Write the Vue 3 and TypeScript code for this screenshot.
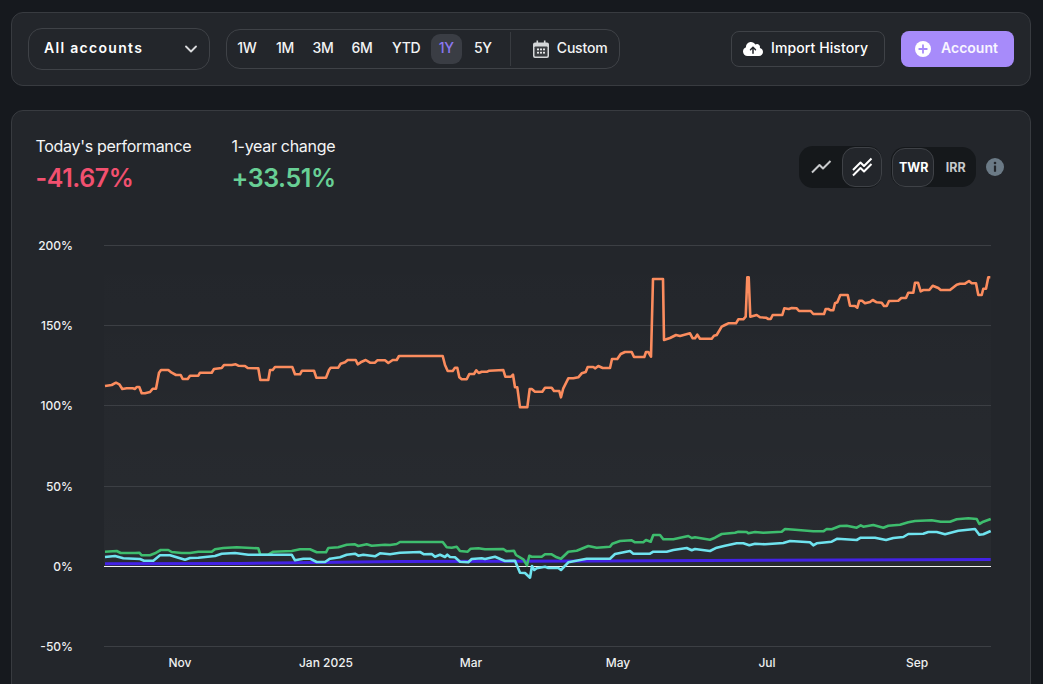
<script setup lang="ts">
const ranges = ['1W', '1M', '3M', '6M', 'YTD', '1Y', '5Y']
const yTicks = [
  { y: 245, label: '200%' },
  { y: 325, label: '150%' },
  { y: 405, label: '100%' },
  { y: 486, label: '50%' },
  { y: 646, label: '-50%' },
]
const xTicks = [
  { x: 180, label: 'Nov' },
  { x: 326, label: 'Jan 2025' },
  { x: 471, label: 'Mar' },
  { x: 618, label: 'May' },
  { x: 767, label: 'Jul' },
  { x: 917, label: 'Sep' },
]
const orange = '105,386 111.7,385 116,382.7 119.3,384.3 122.3,389 126.7,388.3 132.7,388.3 135,389 136.7,387 139.3,387 141.7,393.3 145,393.3 150,392 152.7,388.7 156,388.7 159,372.7 161,370 168.3,370 171.7,372.7 176,375 180.7,375 182.7,379 187.7,379 190,375.7 198.3,375.7 200,372.7 211.7,372.7 214,369 221.7,368 224,365 231.7,365 235.7,364.3 238.3,365.7 245,366 247.7,368 258.3,368.3 260.3,380 268.3,380 270,370 272.7,370 275,367 292.3,367 295,374.3 300,374.3 302,370.7 314,370.7 316.3,377.7 326,377.7 329,370 330.7,367.7 338.3,367.7 340.7,363.7 345,362.3 347.7,360 355.7,360 357.7,364.3 360.7,362.3 365.7,360 370,362.7 375,362.7 377.3,360.3 385,360.3 388.3,363 392.7,360 396.7,360 399,356 442.7,356 445,365 447.7,371 452.7,371 455,367.7 457.3,367.7 459.3,377.3 461.7,379.3 466.7,379.3 469.3,374 474,374 476.3,370.3 478.7,373 481.7,371.7 487.3,371.7 489.3,370.7 503.3,370 505.3,376.7 511,376.7 513,374.7 515,387.3 517.3,387.3 520,407.3 527.3,407.3 529.7,389 531.7,389 535,391.7 542.3,391.7 545,387.7 551.7,387.7 554,391 559.3,391 561,397.3 563.3,388.3 568.3,378.3 573.3,378.3 578.3,377.3 581.7,373.3 585.7,372 587.7,367 593.3,367 595.3,368.3 598.3,366 602.7,368 610,368 612,359 617.3,359 620.7,354 625,352 631.7,352 634,357 644.3,357 646,352 648.3,352 651,356.7 653,279 663,279 664,340 670,338 676,335 680,336 690,333.3 692.7,338.3 695,338.3 697.3,334.7 700,338.7 711.7,338.7 714,335.7 716.7,335 721.7,326.7 725,325 728.3,323.3 736,323.3 738.3,319.3 743.3,319.3 745.7,316.7 747.3,277.3 748.7,277.3 750.3,316.7 756.7,315 760,317.3 766,317.7 768.3,319 770.7,319 772.7,315 782.3,315 784.3,308.3 788.7,309 791.7,308 796.7,308.3 799,311 810.7,311 813.3,314 824,314 825.7,309 828.3,309 830.7,310.3 833.3,310.3 835,303.3 837.3,302.3 840.3,295 847.7,295 850,305.7 855,306 857.3,307.7 859.3,300.7 862,300.7 865,303.3 870,302 872.7,300 876.7,302.3 881.7,302.7 884,306 886.7,306 889,301 898.3,300.7 901.3,298 906,298 908.3,292.7 913.3,292.7 915,282.7 918,282.7 920.7,291.3 923.3,290 929.3,290 932.7,285.7 938.3,288 940.7,290 950,290 956.7,284.7 960,283.7 965,283.7 969,281 971.7,283.3 976,283.3 978.3,295 981.7,295 983.3,288.7 986,288.7 988.3,277.3 990.3,277.3'
const green = '105,551.7 116.7,551 120.7,553 135,553 139.3,552.7 141.7,555.3 150,555.3 155,553.3 160.7,550 168.3,550 171.7,552 181.7,553 190,553 198.3,551.7 211.7,551.7 215,549.3 223.3,548 236.7,547.3 258.3,548.3 260.3,554.7 268.3,554.7 273.3,551.7 291.7,551 300,549.3 310,549.3 316.7,552.3 326,552.3 328.3,548 338.3,547.3 346.7,544.7 355,544.3 358.3,546 366.7,544.3 371.7,545.7 385,544.7 390,545 396.7,544 400,542 442.7,542 446.7,547.3 451.7,547.7 456.7,546.7 460,551 467.7,551.7 470.7,548.7 478.3,548.3 485,549.3 503.3,549 506.7,551.3 514,550.7 516,555 523.3,559.3 527,565.3 529.3,555.7 531.7,556.7 541.7,556.7 545,554.3 551.7,554.3 556.7,557.3 561,558.7 568.3,551.7 576.7,550.7 588.3,546 596.7,547.7 610,546.7 612.3,543.7 620,541 631.7,540.3 635,542.3 643.3,542.3 646,540 650.7,541.7 653.3,535 660,535 663.3,539.3 673.3,539.3 688.3,536 691.7,538 695,537.3 710,539.7 715,537.7 721.7,534 735,532.7 738.3,531.7 746.7,532 748.3,533.3 755,532 763.3,532.7 781.7,531.7 785,529 795,529.7 813.3,531.3 823.3,531.3 826.7,529 831.7,529.3 840,526 846.7,525.7 856.7,527.7 860.7,525.3 863.3,526.7 873.3,525 883.3,527.7 888.3,525.7 900,524.7 908.3,522.3 915,521 931.7,520.3 940.7,521.7 950,521.7 956.7,519.3 968.3,518.3 976.7,519 979.3,524 983.3,521.7 990.7,519'
const cyan = '105,557 115,556 123.3,558.3 140,559 144,560.7 153.3,560.7 160,555.3 170,555.3 185,559.7 190,558 198.3,557.7 215,556 221.7,553.7 235,553 248.3,554.7 291.7,554.7 295,560.3 303.3,558.7 310,558.7 316.7,562 325,562 330,558.7 340,557.3 346.7,554.7 355,553.7 358.3,555.7 363.3,554.7 375,556.3 380,553.3 390,554.3 400,552.7 420,552 424,554.3 431.7,554 435,556.7 440,554.7 445,557 447.3,554.7 450,557 455,557.3 460,561.7 468.3,562.3 471.7,559 481.7,558.3 485,559 495,556.7 505,561 515,560.7 520,572.7 525,573 530,577.7 532,566 534.3,570 536.7,568.3 545,566.7 548.3,568 558.3,568 561,570 568.3,562.3 586.7,558.7 610,558.7 615,554 630,551 633.3,553.7 650,553.7 653.3,551.7 666.7,551.7 673.3,550 686.7,548 691.7,550.3 695,549 710,551 716.7,547.7 725,545.7 736.7,543.3 743.3,543.3 749.3,545.3 755,543.7 765,544.3 783.3,543 790,541 810,542.3 813.3,545.3 816.7,543.3 831.7,541.7 837.3,538.7 856.7,540 860.7,537.7 875,537.7 886,540 893.3,538 903.3,537 908.3,534 923.3,533.7 928.3,532 936.7,532 945,534.3 958.3,530.7 975,529 979.3,534.7 983.3,534.3 990.7,531'
const blue = '105,563.8 240,563.5 400,561.6 600,561 760,560.2 990.7,559.6'
</script>

<template>
  <div class="page">
    <header class="toolbar">
      <div class="select">
        <span class="raise">All accounts</span>
        <svg class="chev" viewBox="0 0 12 8" width="12" height="8">
          <path d="M1 1.500 6 6.500 11 1.500" fill="none" stroke="#d9dadc" stroke-width="1.800" stroke-linecap="round" stroke-linejoin="round" />
        </svg>
      </div>
      <div class="ranges">
        <button v-for="r in ranges" :key="r" class="range" :class="['r-' + r, { on: r === '1Y' }]">{{ r }}</button>
        <i class="sep"></i>
        <button class="custom">
          <svg viewBox="0 0 16 18" width="16" height="18">
            <path d="M3.500 0.500h1.600v2h5.800v-2h1.600v2H14a2 2 0 0 1 2 2V16a2 2 0 0 1-2 2H2a2 2 0 0 1-2-2V4.500a2 2 0 0 1 2-2h1.500z" fill="#d4d6d8" />
            <rect x="1.500" y="6.500" width="13" height="10" rx="0.800" fill="#3a3d41" />
            <g fill="#e4e5e6">
              <rect x="4" y="8.500" width="2" height="1.800" />
              <rect x="7" y="8.500" width="2" height="1.800" />
              <rect x="10" y="8.500" width="2" height="1.800" />
              <rect x="4" y="11.800" width="2" height="1.800" />
              <rect x="7" y="11.800" width="2" height="1.800" />
              <rect x="10" y="11.800" width="2" height="1.800" />
            </g>
          </svg>
          <span class="raise">Custom</span>
        </button>
      </div>
      <div class="actions">
        <button class="import">
          <svg viewBox="0 0 640 512" width="20" height="16">
            <path fill="#fff" d="M144 480C64.500 480 0 415.500 0 336c0-62.800 40.200-116.200 96.200-135.900c-.1-2.700-.2-5.400-.2-8.100c0-88.400 71.600-160 160-160c59.300 0 111 32.200 138.700 80.200C409.900 102 428.300 96 448 96c53 0 96 43 96 96c0 12.200-2.300 23.800-6.400 34.600C596 238.400 640 290.100 640 352c0 70.700-57.300 128-128 128H144zm79-217c-9.400 9.400-9.400 24.600 0 33.900s24.600 9.400 33.900 0l39-39V392c0 13.300 10.700 24 24 24s24-10.700 24-24V257.900l39 39c9.400 9.400 24.600 9.400 33.900 0s9.400-24.600 0-33.900l-80-80c-9.400-9.400-24.600-9.400-33.900 0l-80 80z" />
          </svg>
          <span class="raise">Import History</span>
        </button>
        <button class="account">
          <svg viewBox="0 0 16 16" width="16" height="16">
            <circle cx="8" cy="8" r="8" fill="#fff" />
            <path d="M8 4.200v7.600M4.200 8h7.600" stroke="#a78bfa" stroke-width="1.800" stroke-linecap="round" />
          </svg>
          <span class="raise">Account</span>
        </button>
      </div>
    </header>

    <section class="card">
      <div class="head">
        <div class="stats">
          <div class="stat">
            <div class="label">Today's performance</div>
            <div class="value neg">-41.67%</div>
          </div>
          <div class="stat">
            <div class="label">1-year change</div>
            <div class="value pos">+33.51%</div>
          </div>
        </div>
        <div class="controls">
          <div class="seg seg-a">
            <button class="seg-btn icon">
              <svg viewBox="0 0 22 14" width="22" height="14">
                <path d="M2 12.500 9.500 5 13 8.500 20.500 1" fill="none" stroke="#c9cbcd" stroke-width="2" stroke-linejoin="round" />
              </svg>
            </button>
            <button class="seg-btn icon on">
              <svg viewBox="0 0 22 20" width="22" height="20">
                <path d="M2 13 9.500 5.500 13 9 20.500 1.500" fill="none" stroke="#fff" stroke-width="2" stroke-linejoin="round" />
                <path d="M2 18.500 9.500 11 13 14.500 20.500 7" fill="none" stroke="#fff" stroke-width="2" stroke-linejoin="round" />
              </svg>
            </button>
          </div>
          <div class="seg seg-b">
            <button class="seg-btn txt on">TWR</button>
            <button class="seg-btn txt">IRR</button>
          </div>
          <svg class="info" viewBox="0 0 18 18" width="18" height="18">
            <circle cx="9" cy="9" r="9" fill="#6b7a86" />
            <circle cx="9" cy="5" r="1.300" fill="#23262b" />
            <rect x="7.900" y="7.400" width="2.200" height="6.400" rx="0.500" fill="#23262b" />
          </svg>
        </div>
      </div>

      <svg class="chart" viewBox="12 230 1018 454" width="1018" height="454">
        <defs>
          <linearGradient id="plotbg" x1="0" y1="0" x2="0" y2="1">
            <stop offset="0" stop-color="#fff" stop-opacity="0" />
            <stop offset="1" stop-color="#fff" stop-opacity="0.025" />
          </linearGradient>
        </defs>
        <rect x="104" y="245" width="887" height="321" fill="url(#plotbg)" />
        <line v-for="t in yTicks" :key="t.y" x1="104" x2="991" :y1="t.y + 0.5" :y2="t.y + 0.5" stroke="#3c3f44" />
        <line x1="104" x2="991" y1="566.500" y2="566.500" stroke="#f2f2f2" />
        <text v-for="t in yTicks" :key="t.label" x="73" :y="t.y + 4.5" text-anchor="end" class="tick">{{ t.label }}</text>
        <text x="73" y="570.500" text-anchor="end" class="tick">0%</text>
        <text v-for="t in xTicks" :key="t.label" :x="t.x" y="667" text-anchor="middle" class="tick">{{ t.label }}</text>
        <polyline :points="blue" fill="none" stroke="#4322e6" stroke-width="3" />
        <polyline :points="orange" fill="none" stroke="#fb8c5e" stroke-width="2.600" stroke-linejoin="round" />
        <polyline :points="green" fill="none" stroke="#3ebd6e" stroke-width="2.600" stroke-linejoin="round" />
        <polyline :points="cyan" fill="none" stroke="#6fe3ef" stroke-width="2.600" stroke-linejoin="round" />
      </svg>
    </section>
  </div>
</template>

<style>
html,
body {
  margin: 0;
  background: #16191e;
}
</style>

<style scoped>
.page {
  box-sizing: border-box;
  width: 1043px;
  height: 684px;
  overflow: hidden;
  padding: 12px 12px 0 11px;
  display: flex;
  flex-direction: column;
  gap: 24px;
  background: #16191e;
  font-family: Inter, "Liberation Sans", sans-serif;
  color: #fff;
}
button {
  font: inherit;
  color: inherit;
  background: none;
  border: 0;
  padding: 0;
}
.raise {
  padding-bottom: 3px;
}
.toolbar {
  box-sizing: border-box;
  height: 74px;
  flex: none;
  display: flex;
  align-items: center;
  padding: 0 16px;
  background: #23262b;
  border: 1px solid #383b40;
  border-radius: 12px;
}
.select {
  box-sizing: border-box;
  width: 182px;
  height: 42px;
  flex: none;
  display: flex;
  align-items: center;
  justify-content: space-between;
  padding: 0 12px 0 15px;
  border: 1px solid #3f4247;
  border-radius: 14px;
  font-size: 14px;
  font-weight: 600;
  letter-spacing: 1.300px;
}
.ranges {
  box-sizing: border-box;
  width: 394px;
  height: 40px;
  margin-left: 16px;
  flex: none;
  display: flex;
  align-items: center;
  padding: 0 4.500px;
  border: 1px solid #3f4247;
  border-radius: 14px;
}
.range {
  height: 30px;
  min-width: 31px;
  padding: 0 3.500px 3px;
  box-sizing: border-box;
  border-radius: 9px;
  font-size: 14px;
  font-weight: 500;
  letter-spacing: -0.3px;
  color: #f2f3f4;
}
.range + .range {
  margin-left: 7px;
}
.range.r-6M {
  margin-left: 8px;
}
.range.r-YTD {
  margin-left: 11px;
}
.range.r-5Y {
  margin-left: 5.500px;
}
.range.on {
  background: #3a3d44;
  color: #8b78f2;
}
.sep {
  width: 1px;
  height: 34px;
  margin-left: 11.500px;
  background: #383b40;
}
.custom {
  display: flex;
  align-items: center;
  gap: 8px;
  margin-left: 22px;
  font-size: 14px;
  font-weight: 500;
  letter-spacing: -0.2px;
  color: #f2f3f4;
}
.actions {
  margin-left: auto;
  display: flex;
  gap: 16px;
}
.import,
.account {
  box-sizing: border-box;
  height: 36px;
  display: flex;
  align-items: center;
  font-size: 14px;
  font-weight: 500;
  border-radius: 8px;
}
.import {
  width: 154px;
  padding-left: 11px;
  gap: 8px;
  border: 1px solid #3f4247;
  color: #fff;
  letter-spacing: 0.1px;
}
.account {
  width: 113px;
  padding-left: 14px;
  gap: 10px;
  background: #a78bfa;
  color: #f8f5ff;
  font-weight: 600;
}
.card {
  flex: none;
  height: 620px;
  box-sizing: border-box;
  background: #23262b;
  border: 1px solid #383b40;
  border-radius: 12px;
}
.head {
  box-sizing: border-box;
  height: 119px;
  display: flex;
  justify-content: space-between;
  align-items: flex-start;
  padding: 25px 26px 0 23.500px;
}
.stats {
  display: flex;
  gap: 40px;
}
.label {
  font-size: 16px;
  line-height: 20px;
  letter-spacing: -0.3px;
  color: #f4f5f6;
}
.value {
  margin-top: 6px;
  font-size: 25px;
  line-height: 32px;
  font-weight: 600;
  letter-spacing: -0.4px;
}
.neg {
  color: #f2506f;
}
.pos {
  color: #68cf95;
}
.controls {
  margin-top: 10px;
  display: flex;
  align-items: center;
}
.seg {
  box-sizing: border-box;
  display: flex;
  align-items: center;
  background: #15181b;
  border-radius: 14px;
}
.seg-a {
  width: 83px;
  height: 42px;
  justify-content: space-between;
  padding-left: 2px;
}
.seg-b {
  width: 85px;
  height: 40px;
  margin-left: 9px;
  padding-left: 1px;
}
.seg-btn {
  box-sizing: border-box;
  display: flex;
  align-items: center;
  justify-content: center;
  border: 1px solid transparent;
  border-radius: 13px;
}
.seg-btn.icon {
  width: 40px;
  height: 40px;
}
.seg-btn.txt {
  width: 43px;
  height: 39px;
  padding-left: 1.500px;
  font-size: 12.500px;
  font-weight: 700;
  color: #c6c9cb;
}
.seg-btn.on {
  background: #23262b;
  border-color: #3f4247;
  color: #fff;
}
.info {
  margin-left: 10px;
}
.chart {
  display: block;
}
.tick {
  font-size: 12px;
  font-weight: 500;
  fill: #eef0f1;
  font-family: Inter, "Liberation Sans", sans-serif;
}
</style>
